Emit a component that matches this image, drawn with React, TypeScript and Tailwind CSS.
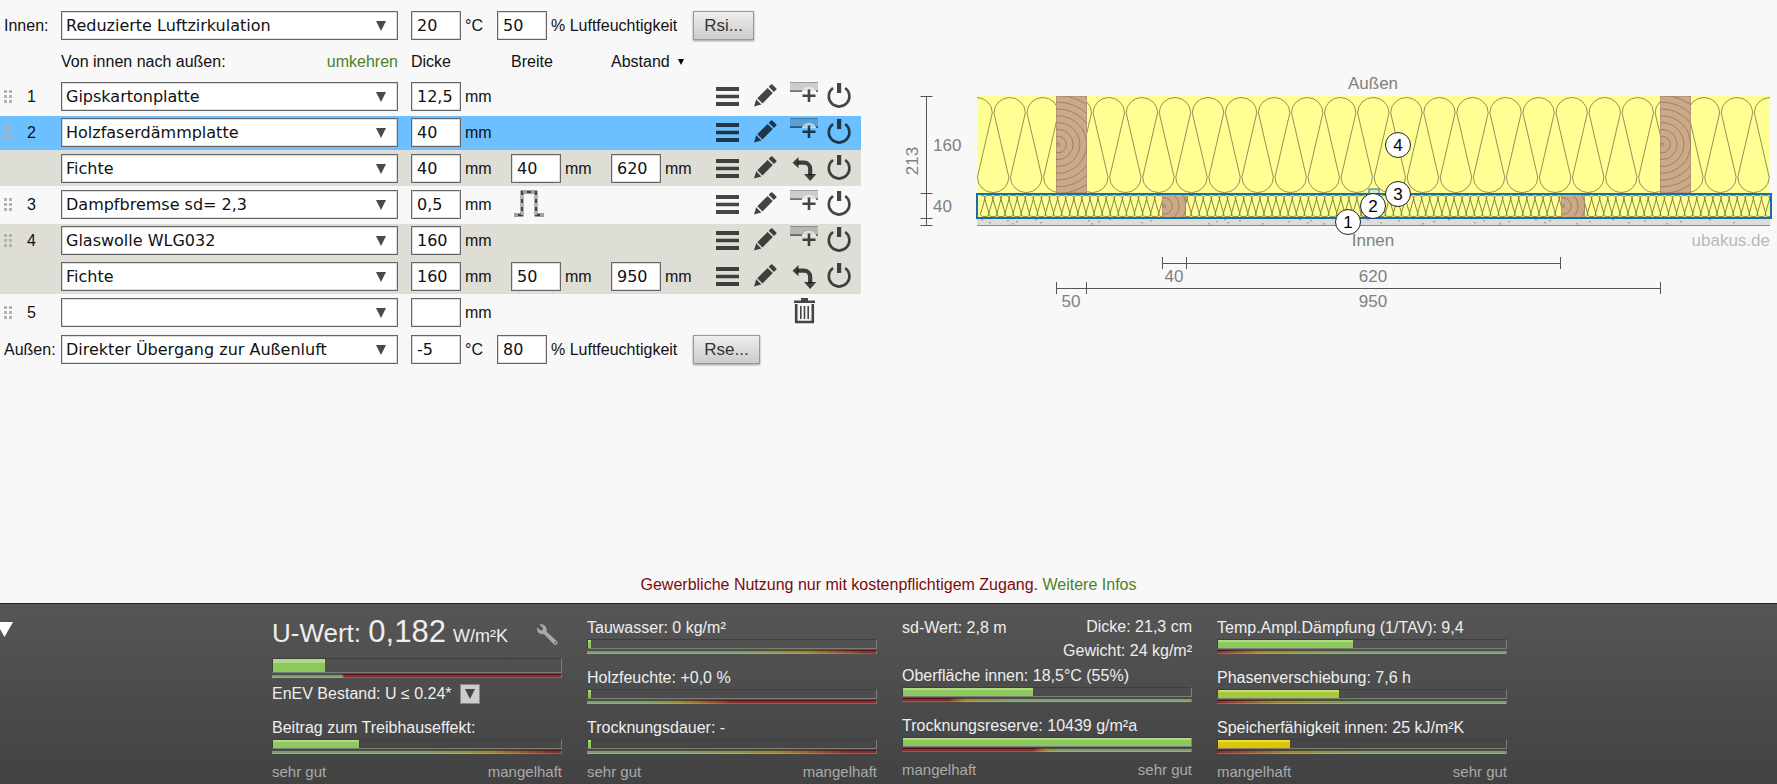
import type { ReactNode } from 'react';

type Layer = {
  nr?: number;
  name: string;
  dicke: string;
  breite?: string;
  abstand?: string;
  foil?: boolean;
  tone: 'plain' | 'active' | 'shaded';
  split?: boolean; // has a second material below
};

const layers: Layer[] = [
  { nr: 1, name: 'Gipskartonplatte', dicke: '12,5', tone: 'plain' },
  { nr: 2, name: 'Holzfaserdämmplatte', dicke: '40', tone: 'active', split: true },
  { name: 'Fichte', dicke: '40', breite: '40', abstand: '620', tone: 'shaded' },
  { nr: 3, name: 'Dampfbremse sd= 2,3', dicke: '0,5', foil: true, tone: 'plain' },
  { nr: 4, name: 'Glaswolle WLG032', dicke: '160', tone: 'shaded', split: true },
  { name: 'Fichte', dicke: '160', breite: '50', abstand: '950', tone: 'shaded' },
  { nr: 5, name: '', dicke: '', tone: 'plain' },
];

const tones = {
  plain: '',
  active: 'bg-[#6cc0ff]',
  shaded: 'bg-[#deded6]',
};

/* ---------- form controls ---------- */

function Dropdown({ label, value }: { label: string; value: string }) {
  return (
    <div className="relative w-[337px] shrink-0">
      <select
        aria-label={label}
        defaultValue={value}
        className="block h-[29px] w-full appearance-none border border-[#666] bg-white pl-1 font-['DejaVu_Sans',sans-serif] text-[16px] leading-[26px] text-[#111] shadow-[inset_0_0_0_1px_#ddd]"
      >
        <option>{value}</option>
      </select>
      <svg className="pointer-events-none absolute top-[10px] right-3 h-[10px] w-[10px]" viewBox="0 0 10 10">
        <path d="M0 0h10L5 10z" fill="#4a4a4a" />
      </svg>
    </div>
  );
}

function NumField({ label, value, unit }: { label: string; value: string; unit: string }) {
  return (
    <label className="flex items-center">
      <input
        aria-label={label}
        defaultValue={value}
        className="h-[29px] w-[50px] border border-[#666] bg-white pl-[5px] font-['DejaVu_Sans',sans-serif] text-[16px] text-[#111] shadow-[inset_0_0_0_1px_#ddd]"
      />
      <span className="pl-1">{unit}</span>
    </label>
  );
}

/* ---------- row icons ---------- */

function IconButton({ title, children }: { title: string; children: ReactNode }) {
  return (
    <button type="button" aria-label={title} className="h-[29px] w-[37px] text-black/72">
      <svg viewBox="0 0 37 29" className="h-full w-full" fill="currentColor">{children}</svg>
    </button>
  );
}

const MenuIcon = () => <path d="M6 5h23v4H6zM6 12.7h23v3.6H6zM6 20h23v4H6z" />;

const PencilIcon = () => (
  <path d="M7 24.5l2.2-7.2 5.2 5.2zM10.3 16.2L20.6 5.9l5.2 5.2L15.5 21.4zM21.7 4.8l2.3-2.3a1 1 0 0 1 1.4 0l3.8 3.8a1 1 0 0 1 0 1.4l-2.3 2.3z" />
);

const AddIcon = () => (
  <>
    <path d="M6 0h28v9H6z" fillOpacity={0.24} />
    <path d="M6 0h28v.8H6z" fillOpacity={0.4} />
    <path d="M18 10a7.3 7.3 0 0 1 14 0z" fill="#fff" fillOpacity={0.5} />
    <path d="M6 8.6h12v1.2H6zM32 8.6h2v1.2h-2z" />
    <path d="M23.700 7.500h2.600v4.900h5.200V15h-5.200v5h-2.600v-5h-5.200v-2.600h5.200z" />
  </>
);

const TurnIcon = () => (
  <>
    <path d="M8.5 8.7L14.5 3v11.2zM20 20h12.4L26.2 27z" />
    <path d="M13.5 8.7H20a6.2 6.2 0 0 1 6.2 6.2V21" fill="none" stroke="currentColor" strokeWidth="4.2" />
  </>
);

const PowerIcon = () => (
  <>
    <path d="M12 6a10.3 10.3 0 1 0 12.2 0" fill="none" stroke="currentColor" strokeWidth="2.6" />
    <path d="M16 1h4.2v10H16z" />
  </>
);

const TrashIcon = () => (
  <>
    <path d="M17 0h7v2.5h7v2.4H10V2.500h7z" />
    <path d="M12.200 6v18h16.600V6" fill="none" stroke="currentColor" strokeWidth="2.6" />
    <path d="M16 8h1.600v13H16zM19.700 8h1.600v13h-1.600zM23.400 8H25v13h-1.600z" />
  </>
);

function Handle() {
  return (
    <svg viewBox="0 0 9 14" className="mx-1 h-[14px] w-[9px]" fill="#b4b4ae">
      {[0, 5, 10].map(y => [0, 5].map(x => <rect key={`${x}-${y}`} x={x} y={y} width="3" height="3" />))}
    </svg>
  );
}

function FoilIcon() {
  const d = 'M1 25h8V2h14v23h8';
  return (
    <button type="button" aria-label="Folienverlauf" className="pl-[2px]">
      <svg viewBox="0 0 32 29" className="h-[29px] w-8" fill="none">
        <path d={d} stroke="#444" strokeWidth="2.8" />
        <path d={d} stroke="#fff" strokeWidth="1.2" strokeDasharray="4 4" />
      </svg>
    </button>
  );
}

function LayerRow({ layer }: { layer: Layer }) {
  const height = layer.split ? 'h-[34px] pt-[2px]' : layer.nr ? 'h-[38px] pt-1' : 'h-9 pt-1';
  const label = layer.nr ? `Schicht ${layer.nr}` : 'Nebenmaterial';
  const empty = layer.name === '';

  return (
    <div className={`flex items-start ${height} ${tones[layer.tone]}`}>
      <div className="flex h-[29px] w-[61px] shrink-0 items-center">
        {layer.nr && (
          <>
            <Handle />
            <span className="pl-[10px]">{layer.nr}</span>
          </>
        )}
      </div>
      <Dropdown label={label} value={layer.name} />
      <div className="ml-[13px] grid grid-cols-[100px_100px_99px]">
        <NumField label={`${label} Dicke`} value={layer.dicke} unit="mm" />
        {layer.foil && <FoilIcon />}
        {layer.breite && <NumField label={`${label} Breite`} value={layer.breite} unit="mm" />}
        {layer.abstand && <NumField label={`${label} Abstand`} value={layer.abstand} unit="mm" />}
      </div>
      {empty ? (
        <div className="flex pl-[74px]">
          <IconButton title="Löschen"><TrashIcon /></IconButton>
        </div>
      ) : (
        <div className="flex">
          <IconButton title="Menü"><MenuIcon /></IconButton>
          <IconButton title="Bearbeiten"><PencilIcon /></IconButton>
          {layer.nr ? (
            <IconButton title="Schicht einfügen"><AddIcon /></IconButton>
          ) : (
            <IconButton title="Drehen"><TurnIcon /></IconButton>
          )}
          <IconButton title="Ein/Aus"><PowerIcon /></IconButton>
        </div>
      )}
    </div>
  );
}

function ClimateRow({ side, surface, temp, humidity, button }: {
  side: string; surface: string; temp: string; humidity: string; button: string;
}) {
  return (
    <div className="flex items-center">
      <span className="w-[61px] shrink-0 pl-1">{side}:</span>
      <Dropdown label={side} value={surface} />
      <div className="ml-[13px] w-[86px]">
        <NumField label={`${side} Temperatur`} value={temp} unit="°C" />
      </div>
      <NumField label={`${side} Luftfeuchtigkeit`} value={humidity} unit="% Luftfeuchtigkeit" />
      <button
        type="button"
        className="ml-4 h-[29px] border border-[#999] bg-linear-to-b from-[#eee] to-[#ccc] px-[10px] text-[17px] leading-[26px] text-[#333] shadow-[0_1px_2px_#999]"
      >
        {button}
      </button>
    </div>
  );
}

/* ---------- cross section drawing ---------- */

// continuous loop hatch for insulation: period p, arc radii rx/ry, between y = top and y = bottom
function loops(x0: number, p: number, rx: number, ry: number, top: number, bottom: number, count: number) {
  let d = `M${x0} ${top}A${rx} ${ry} 0 0 1 ${x0 + rx} ${top + ry}`;
  for (let i = 0; i < count; i++) {
    const x = x0 + i * p;
    d += `L${x + p / 2 - rx} ${bottom - ry}A${rx} ${ry} 0 0 0 ${x + p / 2 + rx} ${bottom - ry}`;
    d += `L${x + p - rx} ${top + ry}A${rx} ${ry} 0 0 1 ${x + p + rx} ${top + ry}`;
  }
  return d;
}

function Wood({ id, x, y, w, h }: { id: string; x: number; y: number; w: number; h: number }) {
  const rings = Array.from({ length: Math.ceil(Math.hypot(w, h / 2) / 7) + 1 }, (_, i) => 1.5 + i * 6.8);
  return (
    <g>
      <clipPath id={id}><rect x={x} y={y} width={w} height={h} /></clipPath>
      <rect x={x} y={y} width={w} height={h} fill="#cba986" />
      <g clipPath={`url(#${id})`} fill="none" stroke="#967a62" strokeWidth="0.9">
        {rings.map(r => <circle key={r} cx={x + 2} cy={y + h / 2} r={r} />)}
        <rect x={x} y={y} width={w} height={h} stroke="#a08468" />
      </g>
    </g>
  );
}

const badges = [
  { nr: 4, x: 537, y: 145 },
  { nr: 3, x: 537, y: 194 },
  { nr: 2, x: 512, y: 206 },
  { nr: 1, x: 487, y: 222 },
];

const specks = [
  3, 11, 29, 34, 38, 57, 62, 110, 113, 120, 131, 163, 172, 230, 238, 246, 249, 261, 284, 310, 321, 329, 332, 345,
  368, 389, 402, 420, 444, 455, 470, 496, 505, 521, 530, 557, 566, 571, 598, 611, 634, 650, 666, 688, 702, 731, 755,
];

function CrossSection() {
  return (
    <svg viewBox="0 0 916 320" className="w-full font-['Liberation_Sans',Arial,sans-serif] text-[17px]" role="img" aria-label="Bauteilquerschnitt">
      <clipPath id="section"><rect x="116" y="96" width="793" height="130" /></clipPath>

      <g clipPath="url(#section)">
        <rect x="116" y="96" width="793" height="98" fill="#ffff93" />
        <path d={loops(115.6, 33.06, 15.7, 15.4, 97.5, 192.6, 24)} fill="none" stroke="#858555" strokeWidth="0.9" />
      </g>
      <Wood id="w1" x={195} y={96} w={31} h={97} />
      <Wood id="w2" x={799} y={96} w={31} h={97} />

      {/* gypsum board */}
      <rect x="116" y="218" width="793" height="7" fill="#dcdcdc" />
      {specks.map((s, i) => (
        <rect key={s} x={117 + s} y={219 + ((i * 3) % 5)} width="2" height="1.4" fill="#a5a5a5" />
      ))}
      <path d="M116 225.500h793" stroke="#888" />

      <g clipPath="url(#section)">
        <rect x="116" y="194" width="793" height="24" fill="#ffff93" />
        <path d={loops(119.800, 8.09, 4.4, 2.2, 195.500, 216.500, 98)} fill="none" stroke="#77773f" strokeWidth="0.9" />
      </g>
      <Wood id="w3" x={301} y={194} w={24} h={24} />
      <Wood id="w4" x={700} y={194} w={24} h={24} />
      <rect x="508" y="189" width="10" height="12" fill="#d8e4e4" stroke="#1f7288" />
      <rect x="116" y="194" width="794" height="24" fill="none" stroke="#1670a8" strokeWidth="2" />

      {/* dimension lines */}
      <g fill="none" stroke="#555">
        <path d="M65.500 96v130M59.500 96.500h12M59.500 193.500h12M59.500 218.500h12M59.500 225.500h12" />
        <path d="M301 263.500h399M301.500 257v12M325.500 257v12M699.500 257v12" />
        <path d="M195 288.500h604M195.500 282v12M225.500 282v12M799.500 282v12" />
      </g>

      <g fill="#808080">
        <text x="512" y="89" textAnchor="middle">Außen</text>
        <text x="512" y="246" textAnchor="middle">Innen</text>
        <text x="909" y="246" textAnchor="end" fill="#b8b8b8">ubakus.de</text>
        <text x="72" y="151">160</text>
        <text x="72" y="212">40</text>
        <text transform="translate(57 161) rotate(-90)" textAnchor="middle">213</text>
        <text x="313" y="282" textAnchor="middle">40</text>
        <text x="512" y="282" textAnchor="middle">620</text>
        <text x="210" y="307" textAnchor="middle">50</text>
        <text x="512" y="307" textAnchor="middle">950</text>
      </g>

      {badges.map(b => (
        <g key={b.nr}>
          <circle cx={b.x} cy={b.y} r="12.5" fill="#fff" stroke="#222" />
          <text x={b.x} y={b.y + 6} textAnchor="middle" fill="#000">{b.nr}</text>
        </g>
      ))}
    </svg>
  );
}

/* ---------- result panel ---------- */

const green = 'bg-linear-to-b from-[#b2d98a] from-30% to-[#8cc85a] to-30%';
const lime = 'bg-linear-to-b from-[#c4db78] from-30% to-[#a5c93c] to-30%';
const yellow = 'bg-linear-to-b from-[#ecdc4a] from-30% to-[#dcc800] to-30%';

function Meter({ fill, color = green, scale, tall }: { fill: number; color?: string; scale: string; tall?: boolean }) {
  return (
    <div>
      <div className={`border border-t-[#3e3e3e] border-r-[#7c7c7c] border-b-[#7c7c7c] border-l-[#3e3e3e] ${tall ? 'h-[15px]' : 'h-[10px]'}`}>
        <div className={`h-full ${color}`} style={{ width: `${fill}%` }} />
      </div>
      <div className={`mt-px h-1 border-t border-r border-t-black/45 border-r-[#7c7c7c] border-b border-b-white/20 ${scale}`} />
    </div>
  );
}

function Item({ label, ...meter }: { label: string; fill: number; color?: string; scale: string }) {
  return (
    <div>
      <p className="h-6 leading-[25px]">{label}</p>
      <Meter {...meter} />
    </div>
  );
}

function Legend({ from, to }: { from: string; to: string }) {
  return (
    <div className="mt-2 flex justify-between text-[15px] leading-5 text-[#aaa]">
      <span>{from}</span>
      <span>{to}</span>
    </div>
  );
}

function Results() {
  return (
    <footer className="relative h-[181px] border-t border-[#222] bg-linear-to-b from-[#565656] to-[#424242] pt-[11px] text-[#eee]">
      <button type="button" aria-label="Ergebnisse einklappen" className="absolute top-[18px] left-[-4px]">
        <svg viewBox="0 0 17 15" className="h-[15px] w-[17px]"><path d="M0 0h17L8.500 15z" fill="#fff" /></svg>
      </button>

      <div className="mx-auto grid w-fit grid-cols-[repeat(4,290px)] gap-[25px] pl-[2px]">
        <section>
          <div className="flex h-[43px] items-baseline">
            <h2 className="text-[26px] leading-[34px] whitespace-pre">
              U-Wert: <span className="text-[31px]">0,182</span> <span className="text-[18px]">W/m²K</span>
            </h2>
            <button type="button" aria-label="Einstellungen" className="mr-1 ml-auto self-start pt-[9px]">
              <svg viewBox="0 0 21 21" className="h-[21px] w-[21px]" fill="#aaa">
                <path d="M2.500.6L6 4.100 5.600 6.200 3.500 6.600.3 3.400C-.5 6.200 1 9.200 4 10c1.100.3 2 .2 2.900-.1l9.800 10.300c.9.900 2.300.9 3.200 0 .9-.9.800-2.300-.1-3.200L9.400 7.500c.4-1 .4-2 .1-3C8.700 1.500 5.500-.3 2.500.6zm15.700 17a.9.900 0 1 1 0 1.800.9.900 0 0 1 0-1.800z" />
              </svg>
            </button>
          </div>
          <Meter tall fill={18} scale="bg-linear-to-r from-[#7f9a6c] from-24% to-[#8a2c2c] to-25%" />
          <div className="mt-1 mb-[9px] flex h-6 items-center">
            <span>EnEV Bestand: U ≤ 0.24*</span>
            <button type="button" aria-label="Anforderung wählen" className="ml-2 flex h-5 w-5 items-center justify-center border border-[#888] bg-[#ccc]">
              <svg viewBox="0 0 10 10" className="h-[10px] w-[10px]"><path d="M0 0h10L5 10z" fill="#444" /></svg>
            </button>
          </div>
          <Item label="Beitrag zum Treibhauseffekt:" fill={30} scale="bg-linear-to-r from-[#7f9a6c] from-55% via-[#9a8a35] via-75% to-[#8a2c2c] to-97%" />
          <Legend from="sehr gut" to="mangelhaft" />
        </section>

        <section>
          <div className="flex flex-col gap-[11px]">
            <Item label="Tauwasser: 0 kg/m²" fill={1} scale="bg-linear-to-r from-[#7f9a6c] from-55% via-[#9a8a35] via-75% to-[#8a2c2c] to-97%" />
            <Item label="Holzfeuchte: +0,0 %" fill={1} scale="bg-linear-to-r from-[#7f9a6c] from-22% via-[#9a8a35] via-32% to-[#8a2c2c] to-50%" />
            <Item label="Trocknungsdauer: -" fill={1} scale="bg-linear-to-r from-[#7f9a6c] from-35% via-[#9a8a35] via-65% to-[#8a2c2c] to-90%" />
          </div>
          <Legend from="sehr gut" to="mangelhaft" />
        </section>

        <section>
          <div className="flex h-12 justify-between leading-[25px]">
            <p>sd-Wert: 2,8 m</p>
            <p className="text-right leading-6">Dicke: 21,3 cm<br />Gewicht: 24 kg/m²</p>
          </div>
          <div className="flex flex-col gap-[11px]">
            <Item label="Oberfläche innen: 18,5°C (55%)" fill={45} scale="bg-linear-to-r from-[#8a2c2c] from-16% via-[#9a8a35] via-22% to-[#7f9a6c] to-36%" />
            <Item label="Trocknungsreserve: 10439 g/m²a" fill={100} scale="bg-linear-to-r from-[#8a2c2c] from-45% via-[#9a8a35] via-50% to-[#7f9a6c] to-55%" />
          </div>
          <Legend from="mangelhaft" to="sehr gut" />
        </section>

        <section>
          <div className="flex flex-col gap-[11px]">
            <Item label="Temp.Ampl.Dämpfung (1/TAV): 9,4" fill={47} scale="bg-linear-to-r from-[#8a2c2c] via-[#9a8a35] via-15% to-[#7f9a6c] to-45%" />
            <Item label="Phasenverschiebung: 7,6 h" fill={42} color={lime} scale="bg-linear-to-r from-[#8a2c2c] via-[#9a8a35] via-22% to-[#7f9a6c] to-50%" />
            <Item label="Speicherfähigkeit innen: 25 kJ/m²K" fill={25} color={yellow} scale="bg-linear-to-r from-[#8a2c2c] via-[#9a8a35] via-26% to-[#7f9a6c] to-50%" />
          </div>
          <Legend from="mangelhaft" to="sehr gut" />
        </section>
      </div>
    </footer>
  );
}

export default function App() {
  return (
    <div className="flex min-h-screen flex-col bg-[#f8f8f8] font-['Liberation_Sans',Arial,sans-serif] text-[16px] text-[#111]">
      <main className="flex flex-1 items-start">
        <form className="w-[861px] shrink-0 pt-[11px]">
          <ClimateRow side="Innen" surface="Reduzierte Luftzirkulation" temp="20" humidity="50" button="Rsi..." />

          <div className="flex h-[38px] items-center pt-[5px] pl-[61px]">
            <div className="flex w-[337px] justify-between">
              <span>Von innen nach außen:</span>
              <a href="#umkehren" className="text-[#4d7f2a]">umkehren</a>
            </div>
            <span className="ml-[13px] w-[100px]">Dicke</span>
            <span className="w-[100px]">Breite</span>
            <button type="button" className="flex items-center gap-2">
              Abstand
              <svg viewBox="0 0 6 6" className="h-[6px] w-[6px]"><path d="M0 0h6L3 6z" /></svg>
            </button>
          </div>

          {layers.map((layer, i) => <LayerRow key={i} layer={layer} />)}

          <div className="pt-[3px]">
            <ClimateRow side="Außen" surface="Direkter Übergang zur Außenluft" temp="-5" humidity="80" button="Rse..." />
          </div>
        </form>

        <div className="min-w-0 flex-1">
          <CrossSection />
        </div>
      </main>

      <p className="pb-[6px] text-center leading-6 text-[#7c0a0a]">
        Gewerbliche Nutzung nur mit kostenpflichtigem Zugang. <a href="#infos" className="text-[#4d7f2a]">Weitere Infos</a>
      </p>

      <Results />
    </div>
  );
}
